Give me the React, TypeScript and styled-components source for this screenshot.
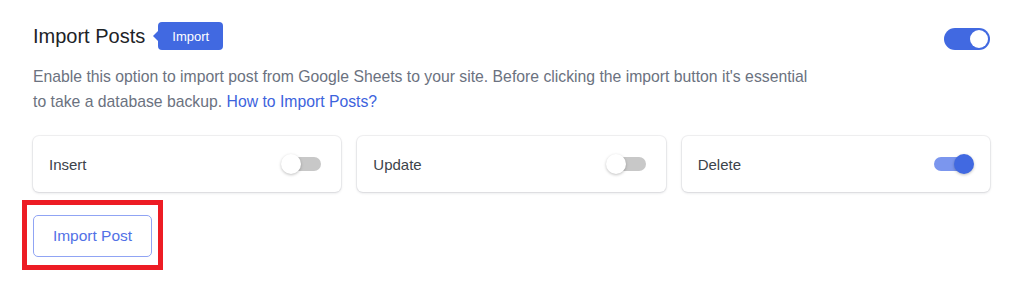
import React from "react";
import styled, { createGlobalStyle } from "styled-components";

const GlobalStyle = createGlobalStyle`
  html, body { margin: 0; padding: 0; background: #ffffff; }
  body { font-family: "Liberation Sans", Arial, sans-serif; }
`;

const Page = styled.div`
  width: 1024px;
  height: 282px;
  box-sizing: border-box;
  padding: 22px 34px 0 33px;
  background: #ffffff;
`;

const Header = styled.div`
  display: flex;
  align-items: center;
  justify-content: space-between;
  height: 28px;
`;

const TitleGroup = styled.div`
  display: flex;
  align-items: center;
`;

const Title = styled.h2`
  margin: 0;
  font-size: 20px;
  line-height: 28px;
  font-weight: 400;
  color: #1d2327;
`;

const Badge = styled.span`
  position: relative;
  margin-left: 13px;
  height: 28px;
  display: inline-flex;
  align-items: center;
  padding: 0 14px;
  border-radius: 4px;
  background: #4169e1;
  color: #ffffff;
  font-size: 13px;
  &::before {
    content: "";
    position: absolute;
    left: -5px;
    top: 50%;
    margin-top: -5px;
    border-style: solid;
    border-width: 5px 5px 5px 0;
    border-color: transparent #4169e1 transparent transparent;
  }
`;

const MainToggle = styled.span<{ $on: boolean }>`
  position: relative;
  display: inline-block;
  width: 46px;
  height: 22px;
  margin-top: 6px;
  border-radius: 11px;
  background: ${(p) => (p.$on ? "#4169e1" : "#c4c4c4")};
  &::after {
    content: "";
    position: absolute;
    top: 2px;
    left: ${(p) => (p.$on ? "26px" : "2px")};
    width: 18px;
    height: 18px;
    border-radius: 50%;
    background: #ffffff;
  }
`;

const Description = styled.p`
  margin: 14px 0 0 0;
  max-width: 790px;
  font-size: 15.75px;
  line-height: 25px;
  color: #6b7280;
`;

const Link = styled.a`
  color: #3d63dd;
  text-decoration: none;
`;

const Options = styled.div`
  display: grid;
  grid-template-columns: repeat(3, 1fr);
  gap: 16px;
  margin-top: 22px;
`;

const OptionCard = styled.div`
  height: 56px;
  box-sizing: border-box;
  display: flex;
  align-items: center;
  justify-content: space-between;
  padding: 0 20px 0 16px;
  border-radius: 6px;
  background: #ffffff;
  box-shadow: 0 0 0 1px rgba(17, 24, 39, 0.05), 0 1px 3px rgba(17, 24, 39, 0.14);
`;

const OptionLabel = styled.span`
  font-size: 15px;
  color: #3c434a;
`;

const SmallSwitch = styled.span<{ $on: boolean }>`
  position: relative;
  display: inline-block;
  width: 36px;
  height: 14px;
  border-radius: 7px;
  background: ${(p) => (p.$on ? "#7b96ee" : "#c8c8c8")};
`;

const Thumb = styled.span<{ $on: boolean }>`
  position: absolute;
  top: -3px;
  left: ${(p) => (p.$on ? "20px" : "-4px")};
  width: 20px;
  height: 20px;
  border-radius: 50%;
  background: ${(p) => (p.$on ? "#4169e1" : "#ffffff")};
  box-shadow: 0 1px 3px rgba(0, 0, 0, 0.25);
`;

const ActionArea = styled.div`
  margin-top: 23px;
  display: flex;
`;

const Highlight = styled.div`
  position: relative;
  display: inline-flex;
  &::after {
    content: "";
    position: absolute;
    left: -11px;
    top: -15px;
    right: -11px;
    bottom: -13px;
    border: 5px solid #ed1c24;
    pointer-events: none;
  }
`;

const ImportButton = styled.button`
  height: 42px;
  padding: 0;
  box-sizing: border-box;
  width: 119px;
  border: 1px solid #90a4f4;
  border-radius: 5px;
  background: #ffffff;
  color: #5271e6;
  font-family: "Liberation Sans", Arial, sans-serif;
  font-size: 15.5px;
  cursor: pointer;
`;

const options = [
  { label: "Insert", on: false },
  { label: "Update", on: false },
  { label: "Delete", on: true },
];

export default function App() {
  return (
    <>
      <GlobalStyle />
      <Page>
        <Header>
          <TitleGroup>
            <Title>Import Posts</Title>
            <Badge>Import</Badge>
          </TitleGroup>
          <MainToggle $on={true} />
        </Header>
        <Description>
          Enable this option to import post from Google Sheets to your site. Before clicking the import button it's
          essential to take a database backup. <Link href="#">How to Import Posts?</Link>
        </Description>
        <Options>
          {options.map((o) => (
            <OptionCard key={o.label}>
              <OptionLabel>{o.label}</OptionLabel>
              <SmallSwitch $on={o.on}>
                <Thumb $on={o.on} />
              </SmallSwitch>
            </OptionCard>
          ))}
        </Options>
        <ActionArea>
          <Highlight>
            <ImportButton>Import Post</ImportButton>
          </Highlight>
        </ActionArea>
      </Page>
    </>
  );
}
